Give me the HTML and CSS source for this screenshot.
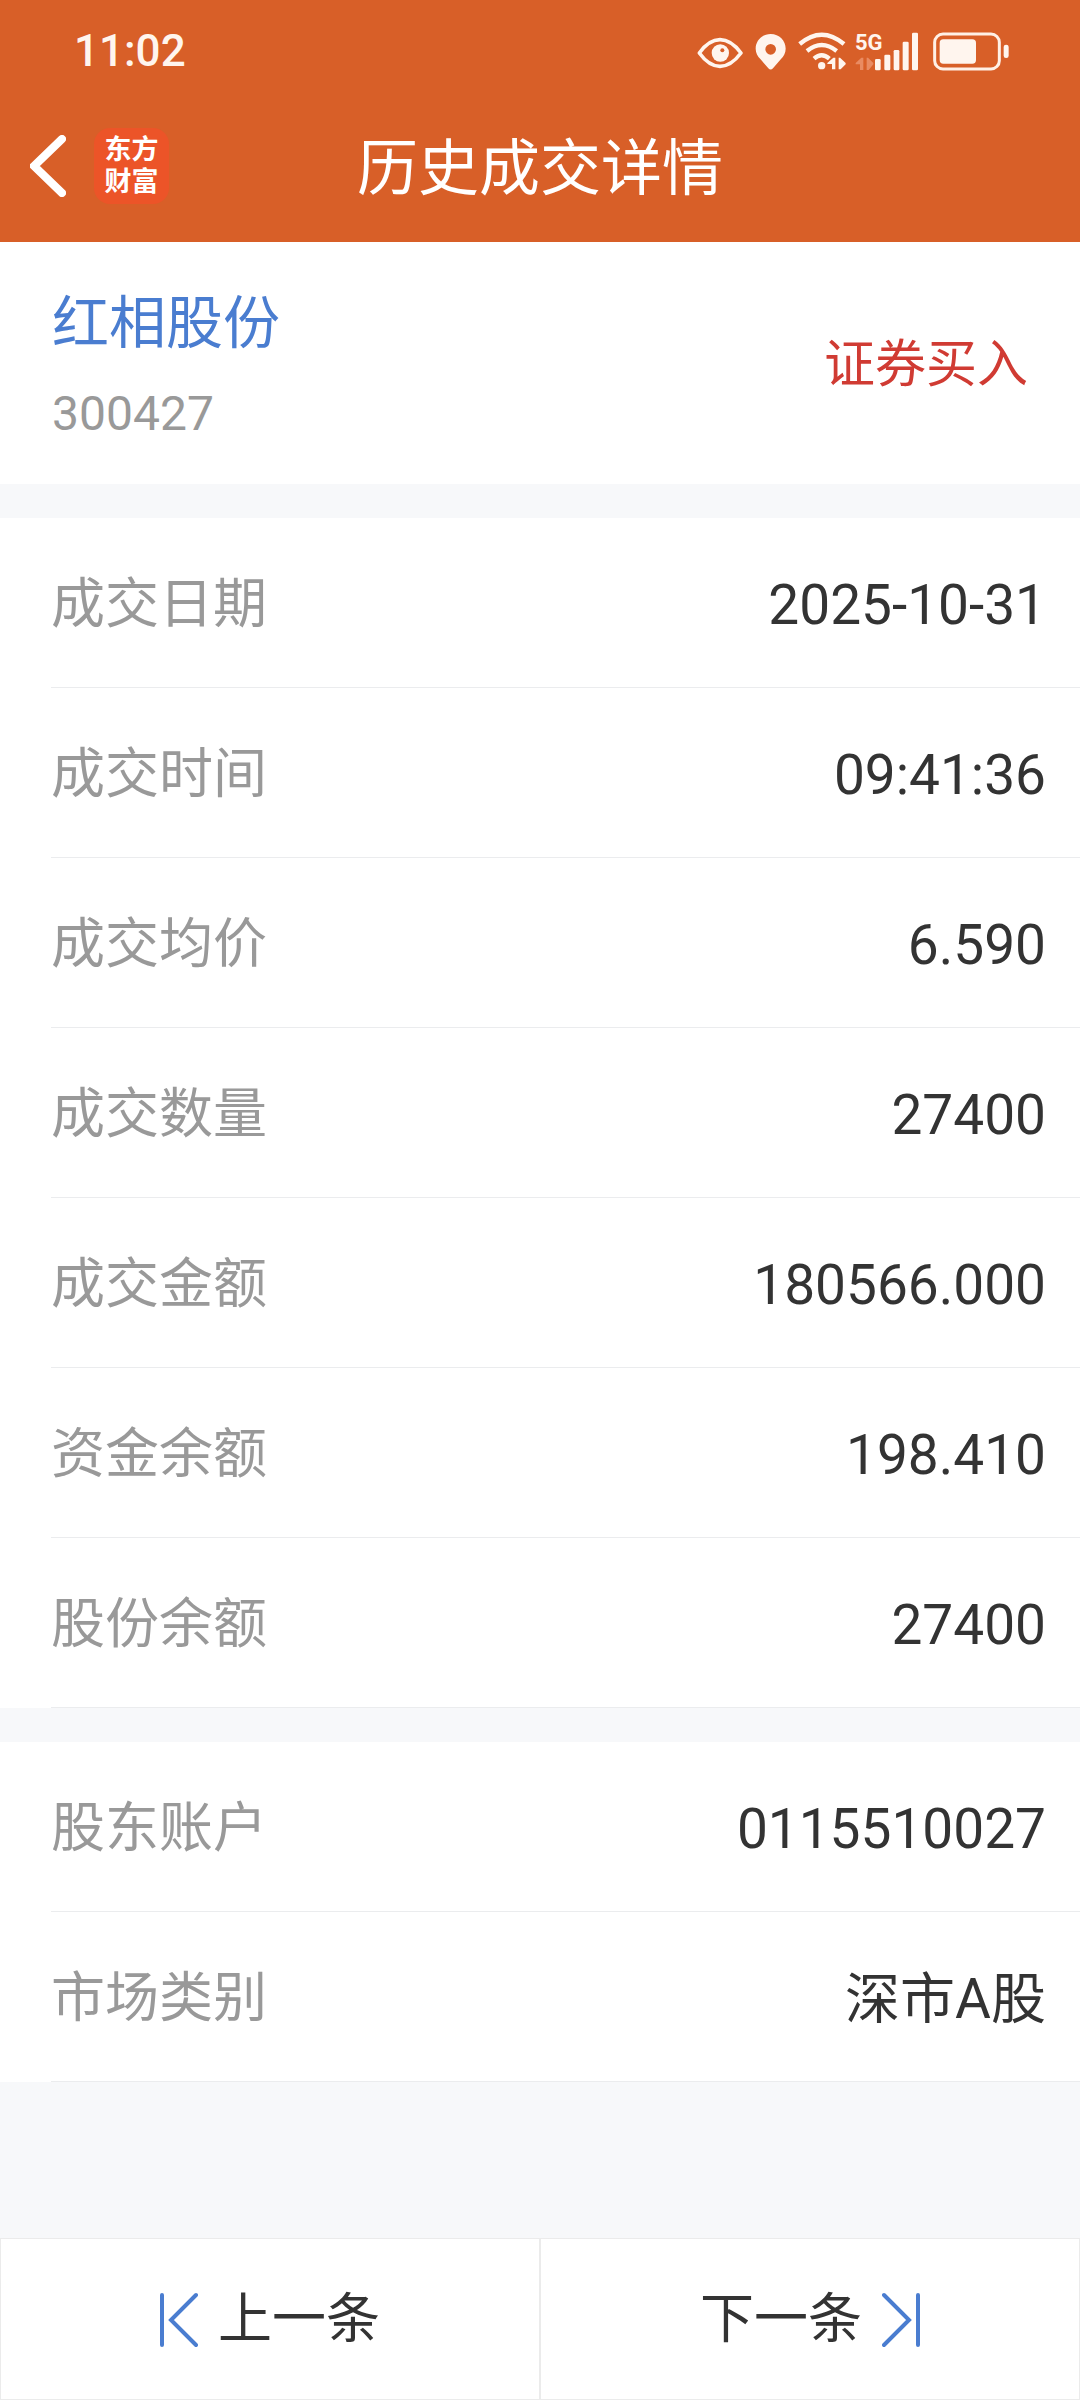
FILE: index.html
```html
<!DOCTYPE html>
<html lang="zh-CN">
<head>
    <meta charset="UTF-8">
    <meta name="viewport" content="width=device-width, initial-scale=1.0">
    <title>历史成交详情</title>
    <link rel="stylesheet" href="styles.css">
</head>
<body>
    <header class="header">
        <div class="status-bar">
            <span class="time">11:02</span>
            <div class="status-icons">
                <svg width="50" height="41" viewBox="109 90 150 123">
                    <path d="M119 156Q148 116 181 116T244 156Q214 196 181 196T119 156Z" fill="none" stroke="#fff5ee" stroke-width="11" stroke-linejoin="round"/>
                    <circle cx="182" cy="156" r="26" fill="#fff5ee"/>
                    <circle cx="188" cy="148" r="6" fill="#d85f28"/>
                </svg>
                <svg width="34" height="41" viewBox="286 90 102 123">
                    <path fill="#fff5ee" fill-rule="evenodd" d="M333 99C307 99 288 119 288 143C288 156 294 166 302 174L326 202Q333 209 340 202L364 174C372 166 378 156 378 143C378 119 359 99 333 99ZM333 129a16 16 0 1 1 0 32a16 16 0 1 1 0-32Z"/>
                </svg>
                <svg width="48" height="41" viewBox="415 90 144 123">
                    <g fill="none" stroke="#fff5ee" stroke-width="13">
                        <path d="M420 129Q486 73 553 129"/>
                        <path d="M442 150Q486 114 531 150"/>
                        <path d="M463 173Q486 153 509 173"/>
                    </g>
                    <circle cx="486" cy="194" r="11" fill="#fff5ee"/>
                    <path fill="#fff5ee" d="M527 170V205H517V189H503V186L521 170ZM537 170H541L558 186V190L543 205H537Z"/>
                </svg>
                <div class="signal">
                    <span class="network">5G</span>
                    <svg width="69" height="41" viewBox="586 90 207 123">
                        <path fill="#e98b62" d="M611 170V207H601V190H588V186L605 170ZM621 170H625L641 186V190L627 207H621Z"/>
                        <g fill="#fff5ee">
                            <rect x="646" y="174" width="17" height="34" rx="4"/>
                            <rect x="674" y="161" width="18" height="47" rx="4"/>
                            <rect x="702" y="147" width="17" height="61" rx="4"/>
                            <rect x="729" y="122" width="18" height="86" rx="4"/>
                            <rect x="757" y="95" width="18" height="113" rx="4"/>
                        </g>
                    </svg>
                </div>
                <svg width="77" height="41" viewBox="820 90 231 123">
                    <rect x="825" y="99" width="194" height="105" rx="25" fill="none" stroke="#fff0e6" stroke-width="9"/>
                    <rect x="840" y="115" width="109" height="73" rx="11" fill="#fff5ee"/>
                    <rect x="1032" y="131" width="15" height="40" rx="7" fill="#fff5ee"/>
                </svg>
            </div>
        </div>
        <nav class="nav-bar">
            <div class="nav-left">
                <button class="back" type="button" aria-label="返回">
                    <svg width="36" height="62" viewBox="0 0 36 62">
                        <path d="M32 4L4 31L32 58" fill="none" stroke="#fff" stroke-width="8" stroke-linecap="round"/>
                    </svg>
                </button>
                <div class="logo">东方<br>财富</div>
            </div>
            <h1 class="title">历史成交详情</h1>
        </nav>
    </header>

    <main>
        <section class="summary">
            <div>
                <h2 class="stock-name">红相股份</h2>
                <p class="stock-code">300427</p>
            </div>
            <span class="trade-type">证券买入</span>
        </section>

        <dl class="details">
            <div class="row"><dt>成交日期</dt><dd>2025-10-31</dd></div>
            <div class="row"><dt>成交时间</dt><dd>09:41:36</dd></div>
            <div class="row"><dt>成交均价</dt><dd>6.590</dd></div>
            <div class="row"><dt>成交数量</dt><dd>27400</dd></div>
            <div class="row"><dt>成交金额</dt><dd>180566.000</dd></div>
            <div class="row"><dt>资金余额</dt><dd>198.410</dd></div>
            <div class="row"><dt>股份余额</dt><dd>27400</dd></div>
        </dl>

        <dl class="details">
            <div class="row"><dt>股东账户</dt><dd>0115510027</dd></div>
            <div class="row"><dt>市场类别</dt><dd>深市A股</dd></div>
        </dl>
    </main>

    <footer class="pager">
        <button type="button">
            <svg width="38" height="56" viewBox="0 0 38 56">
                <path d="M2 3V53M36 3L11 28L36 53" fill="none" stroke="#4a7dd0" stroke-width="4" stroke-linecap="round"/>
            </svg>
            上一条
        </button>
        <button type="button">
            下一条
            <svg width="38" height="56" viewBox="0 0 38 56">
                <path d="M36 3V53M2 3L27 28L2 53" fill="none" stroke="#4a7dd0" stroke-width="4" stroke-linecap="round"/>
            </svg>
        </button>
    </footer>
</body>
</html>
```
FILE: styles.css
```css
* {
    box-sizing: border-box;
}
body {
    font-family: Roboto, "Noto Sans CJK SC", sans-serif;
    line-height: 80px;
    margin: 0;
    min-height: 100vh;
    display: flex;
    flex-direction: column;
    background: #f7f8fa;
    color: #333;
}
h1, h2, p, dl, dd {
    margin: 0;
    font-weight: 400;
}
button {
    font: inherit;
    color: inherit;
    border: none;
    background: none;
    padding: 0;
    cursor: pointer;
}
svg {
    display: block;
}

/* Cabecera */
.header {
    background: #d85f28;
    color: #fff;
    padding-bottom: 12px;
}
.status-bar {
    display: flex;
    justify-content: space-between;
    align-items: center;
    height: 102px;
    padding: 0 70px 0 74px;
}
.time {
    font-size: 44px;
    font-weight: 500;
    color: #fff5ee;
}
.status-icons {
    display: flex;
    gap: 9px;
}
.signal {
    position: relative;
}
.network {
    position: absolute;
    top: 0;
    left: 0;
    font-size: 22px;
    font-weight: 700;
    line-height: 24px;
    color: #fff5ee;
}
.nav-bar {
    display: grid;
    grid-template-columns: 1fr auto 1fr;
    align-items: center;
    height: 128px;
}
.nav-left {
    display: flex;
    align-items: center;
    gap: 28px;
    padding-left: 30px;
}
.logo {
    width: 75px;
    padding: 6px 0;
    border-radius: 16px;
    background: #ec5428;
    font-size: 27px;
    font-weight: 700;
    line-height: 32px;
    text-align: center;
}
.title {
    padding-top: 6px;
    font-size: 61px;
}

/* Resumen */
.summary {
    display: flex;
    justify-content: space-between;
    align-items: center;
    padding: 42px 52px 38px;
    background: #fff;
}
.stock-name {
    font-size: 57px;
    color: #4a7dd0;
}
.stock-code {
    margin-top: 18px;
    font-size: 48px;
    line-height: 64px;
    color: #999;
}
.trade-type {
    font-size: 51px;
    color: #d03b33;
}

/* Detalles */
.details {
    margin-top: 34px;
    padding-left: 51px;
    background: #fff;
}
.row {
    display: flex;
    justify-content: space-between;
    align-items: center;
    height: 170px;
    padding: 4px 34px 0 0;
    border-bottom: 1px solid #ebecee;
}
dt {
    font-size: 54px;
    color: #999;
}
dd {
    font-size: 55px;
}

/* Botones inferiores */
.pager {
    display: flex;
    margin-top: auto;
}
.pager button {
    flex: 1;
    display: flex;
    justify-content: center;
    align-items: center;
    gap: 20px;
    height: 162px;
    padding-top: 2px;
    border: 1px solid #ebebeb;
    background: #fff;
    font-size: 54px;
}
```
